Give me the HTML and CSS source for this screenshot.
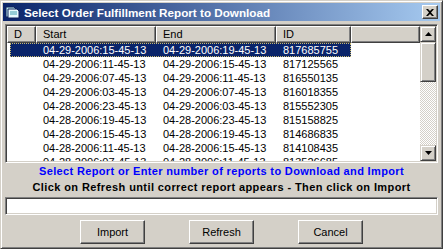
FILE: index.html
```html
<!DOCTYPE html>
<html lang="en">
<head>
    <meta charset="UTF-8">
    <title>Select Order Fulfillment Report to Download</title>
    <link rel="stylesheet" href="styles.css">
</head>
<body>
<div class="window">
    <div class="titlebar">
        <svg class="appicon" width="16" height="16" viewBox="0 0 16 16">
            <path d="M1 3 L9 3 L11 5 L11 13 L1 13 Z" fill="#bfeef0" stroke="#10205a" stroke-width="1"/>
            <path d="M3 5 L12 5 L14 7 L14 14 L3 14 Z" fill="#e8fbff" stroke="#10205a" stroke-width="1"/>
            <path d="M5 8 L12 8 M5 10 L12 10" stroke="#40a0b0" stroke-width="1"/>
        </svg>
        <span class="title">Select Order Fulfillment Report to Download</span>
        <div class="close">
            <svg width="8" height="7" viewBox="0 0 8 7">
                <path d="M0 0 L2 0 L4 2 L6 0 L8 0 L5 3.5 L8 7 L6 7 L4 5 L2 7 L0 7 L3 3.5 Z" fill="#000"/>
            </svg>
        </div>
    </div>

    <div class="content">
        <div class="listview">
            <div class="grid">
                <div class="header">
                    <div class="hcell col-d">D</div>
                    <div class="hcell col-start">Start</div>
                    <div class="hcell col-end">End</div>
                    <div class="hcell col-id">ID</div>
                    <div class="hcell col-fill"></div>
                </div>
                <div class="row">
                    <div class="rowbody selected">
                        <span class="pad"></span>
                        <span class="cell col-start">04-29-2006:15-45-13</span>
                        <span class="cell col-end">04-29-2006:19-45-13</span>
                        <span class="cell col-id">817685755</span>
                    </div>
                </div>
                <div class="row">
                    <div class="rowbody">
                        <span class="pad"></span>
                        <span class="cell col-start">04-29-2006:11-45-13</span>
                        <span class="cell col-end">04-29-2006:15-45-13</span>
                        <span class="cell col-id">817125565</span>
                    </div>
                </div>
                <div class="row">
                    <div class="rowbody">
                        <span class="pad"></span>
                        <span class="cell col-start">04-29-2006:07-45-13</span>
                        <span class="cell col-end">04-29-2006:11-45-13</span>
                        <span class="cell col-id">816550135</span>
                    </div>
                </div>
                <div class="row">
                    <div class="rowbody">
                        <span class="pad"></span>
                        <span class="cell col-start">04-29-2006:03-45-13</span>
                        <span class="cell col-end">04-29-2006:07-45-13</span>
                        <span class="cell col-id">816018355</span>
                    </div>
                </div>
                <div class="row">
                    <div class="rowbody">
                        <span class="pad"></span>
                        <span class="cell col-start">04-28-2006:23-45-13</span>
                        <span class="cell col-end">04-29-2006:03-45-13</span>
                        <span class="cell col-id">815552305</span>
                    </div>
                </div>
                <div class="row">
                    <div class="rowbody">
                        <span class="pad"></span>
                        <span class="cell col-start">04-28-2006:19-45-13</span>
                        <span class="cell col-end">04-28-2006:23-45-13</span>
                        <span class="cell col-id">815158825</span>
                    </div>
                </div>
                <div class="row">
                    <div class="rowbody">
                        <span class="pad"></span>
                        <span class="cell col-start">04-28-2006:15-45-13</span>
                        <span class="cell col-end">04-28-2006:19-45-13</span>
                        <span class="cell col-id">814686835</span>
                    </div>
                </div>
                <div class="row">
                    <div class="rowbody">
                        <span class="pad"></span>
                        <span class="cell col-start">04-28-2006:11-45-13</span>
                        <span class="cell col-end">04-28-2006:15-45-13</span>
                        <span class="cell col-id">814108435</span>
                    </div>
                </div>
                <div class="row">
                    <div class="rowbody">
                        <span class="pad"></span>
                        <span class="cell col-start">04-28-2006:07-45-13</span>
                        <span class="cell col-end">04-28-2006:11-45-13</span>
                        <span class="cell col-id">813526685</span>
                    </div>
                </div>
            </div>
            <div class="scrollbar">
                <div class="sbtn">
                    <svg width="7" height="4" viewBox="0 0 7 4"><path d="M3.5 0 L7 4 L0 4 Z" fill="#000"/></svg>
                </div>
                <div class="thumb"></div>
                <div class="track"></div>
                <div class="sbtn">
                    <svg width="7" height="4" viewBox="0 0 7 4"><path d="M0 0 L7 0 L3.5 4 Z" fill="#000"/></svg>
                </div>
            </div>
        </div>

        <p class="hint blue">Select Report or Enter number of reports to Download and Import</p>
        <p class="hint">Click on Refresh until correct report appears - Then click on Import</p>

        <div class="textbox"></div>

        <div class="buttons">
            <div class="btn">Import</div>
            <div class="btn">Refresh</div>
            <div class="btn">Cancel</div>
        </div>
    </div>
</div>
</body>
</html>
```

FILE: styles.css
```css
body{
    margin: 0;
    background-color: #d4d0c8;
    font-family: "Liberation Sans", Arial, sans-serif;
    font-size: 11px;
    color: #000;
}
.window{
    width: 443px;
    height: 249px;
    box-sizing: border-box;
    overflow: hidden;
    background-color: #d4d0c8;
    border: 1px solid;
    border-color: #d4d0c8 #404040 #404040 #d4d0c8;
    box-shadow: inset 1px 1px #fff, inset -1px -1px #808080;
    padding: 2px;
}
/* title bar */
.titlebar{
    height: 18px;
    display: flex;
    align-items: center;
    padding: 0 2px 0 2px;
    background: linear-gradient(to right, #0a246a, #a6caf0);
}
.appicon{
    flex: none;
}
.title{
    flex: 1;
    margin-left: 3px;
    color: #fff;
    font-weight: bold;
    font-size: 11.7px;
    white-space: nowrap;
}
.close{
    width: 16px;
    height: 14px;
    box-sizing: border-box;
    display: flex;
    align-items: center;
    justify-content: center;
    background-color: #d4d0c8;
    border: 1px solid;
    border-color: #fff #404040 #404040 #fff;
    box-shadow: inset -1px -1px #808080;
}
.content{
    padding: 3px 2px 0 2px;
}
/* list */
.listview{
    height: 139px;
    box-sizing: border-box;
    display: flex;
    background-color: #fff;
    border: 1px solid;
    border-color: #808080 #fff #fff #808080;
    box-shadow: inset 1px 1px #404040, inset -1px -1px #d4d0c8;
    padding: 1px;
}
.grid{
    flex: 1;
    overflow: hidden;
}
.header{
    display: flex;
    height: 17px;
}
.hcell{
    box-sizing: border-box;
    height: 17px;
    line-height: 15px;
    padding-left: 6px;
    background-color: #d4d0c8;
    border: 1px solid;
    border-color: #fff #404040 #404040 #fff;
    box-shadow: inset -1px -1px #808080;
    white-space: nowrap;
}
.col-d{ width: 29px; }
.col-start{ width: 120px; }
.col-end{ width: 120px; }
.col-id{ width: 75px; }
.col-fill{ flex: 1; }

.row{
    height: 14px;
    padding-left: 3px;
}
.rowbody{
    display: flex;
    width: 341px;
    height: 14px;
    box-sizing: border-box;
    line-height: 14px;
}
.rowbody .pad{
    width: 26px;
}
.rowbody .cell{
    padding-left: 7px;
    box-sizing: border-box;
    white-space: nowrap;
}
.rowbody .col-id{
    width: 75px;
    flex: none;
}
.rowbody .col-start,
.rowbody .col-end{
    flex: none;
}
.selected{
    background-color: #0a246a;
    color: #fff;
    outline: 1px dotted #c8b870;
    outline-offset: -1px;
}
/* scrollbar */
.scrollbar{
    width: 16px;
    display: flex;
    flex-direction: column;
}
.sbtn{
    height: 16px;
    box-sizing: border-box;
    display: flex;
    align-items: center;
    justify-content: center;
    background-color: #d4d0c8;
    border: 1px solid;
    border-color: #d4d0c8 #404040 #404040 #d4d0c8;
    box-shadow: inset 1px 1px #fff, inset -1px -1px #808080;
}
.thumb{
    height: 40px;
    box-sizing: border-box;
    background-color: #d4d0c8;
    border: 1px solid;
    border-color: #d4d0c8 #404040 #404040 #d4d0c8;
    box-shadow: inset 1px 1px #fff, inset -1px -1px #808080;
}
.track{
    flex: 1;
    background-image: repeating-conic-gradient(#fff 0 25%, #d4d0c8 0 50%);
    background-size: 2px 2px;
}
/* hints */
.hint{
    margin: 0;
    height: 16px;
    line-height: 16px;
    text-align: center;
    font-weight: bold;
    letter-spacing: 0.4px;
    white-space: nowrap;
}
.blue{
    color: #0000ff;
    letter-spacing: 0.35px;
}
.textbox{
    margin-top: 2px;
    height: 18px;
    box-sizing: border-box;
    background-color: #fff;
    border: 1px solid;
    border-color: #808080 #fff #fff #808080;
    box-shadow: inset 1px 1px #404040, inset -1px -1px #d4d0c8;
}
/* buttons */
.buttons{
    margin-top: 5px;
    display: flex;
    justify-content: center;
    gap: 44px;
}
.btn{
    width: 65px;
    height: 24px;
    box-sizing: border-box;
    line-height: 22px;
    text-align: center;
    background-color: #d4d0c8;
    border: 1px solid;
    border-color: #fff #404040 #404040 #fff;
    box-shadow: inset -1px -1px #808080;
}
```
